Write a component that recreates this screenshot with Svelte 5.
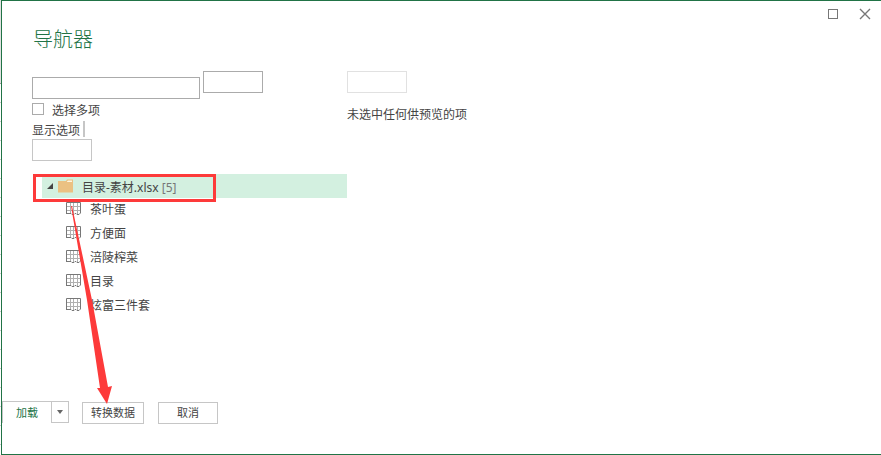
<script lang="ts">
  let search = $state('');
  let multiple = $state(false);

  const fileName = '目录-素材.xlsx';
  const sheets = ['茶叶蛋', '方便面', '涪陵榨菜', '目录', '炫富三件套'];
</script>

<div class="window">
  <div class="edge"></div>
  <div class="dialog">
    <header>
      <h1>导航器</h1>
      <div class="controls">
        <button class="control" aria-label="最大化">
          <svg width="12" height="12" viewBox="0 0 12 12">
            <rect x="1.5" y="1.5" width="9" height="9" />
          </svg>
        </button>
        <button class="control" aria-label="关闭">
          <svg width="12" height="12" viewBox="0 0 12 12">
            <path d="M1 1L11 11M11 1L1 11" stroke-width="1.4" />
          </svg>
        </button>
      </div>
    </header>

    <main>
      <section class="sidebar">
        <div class="search">
          <input type="text" aria-label="搜索" bind:value={search} />
          <button class="box dark" aria-label="搜索"></button>
        </div>
        <label class="multiple">
          <input type="checkbox" bind:checked={multiple} />
          <span>选择多项</span>
        </label>
        <div class="options">
          <span>显示选项</span>
          <i class="separator"></i>
        </div>
        <button class="box" aria-label="刷新"></button>

        <div class="tree">
          <div class="file">
            <svg class="arrow" width="7" height="7" viewBox="0 0 7 7">
              <path d="M6 0V6H0Z" />
            </svg>
            <svg class="folder" width="16" height="14" viewBox="0 0 16 14">
              <path d="M0 2H8L9 0.5H15V13.5H0Z" fill="#ebc182" />
              <path d="M9 2.5L10 1.5H14V3H9Z" fill="#fff5df" />
            </svg>
            <span class="name">{fileName} <span class="count">[{sheets.length}]</span></span>
          </div>
          <ul>
            {#each sheets as sheet}
              <li>
                <svg class="grid" width="15" height="16" viewBox="0 0 15 16">
                  <path class="inner" d="M1 4.5H14M1 8.5H14M4.5 1V12M7.5 1V12M11.5 1V12" />
                  <path class="outer" d="M0.5 12V0.5H14.5V11L13 12.5H11L10 11.5H9L8 12.5H6L5 11.5H0.5" />
                </svg>
                <span>{sheet}</span>
              </li>
            {/each}
          </ul>

          <div class="highlight"></div>
          <svg class="pointer" width="50" height="200" viewBox="0 0 50 200">
            <path d="M5 0H6L26 94L42 181L46 180L41 198L31 182L34 182L21 94Z" />
          </svg>
        </div>
      </section>

      <section class="preview">
        <button class="box light" aria-label="预览"></button>
        <p>未选中任何供预览的项</p>
      </section>
    </main>

    <footer>
      <div class="split">
        <button class="load">加载</button>
        <button class="more" aria-label="更多加载选项">
          <svg width="6" height="4" viewBox="0 0 6 4"><path d="M0 0H6L3 4Z" /></svg>
        </button>
      </div>
      <button class="box transform">转换数据</button>
      <button class="box">取消</button>
    </footer>
  </div>
</div>

<style>
  :global(body) {
    margin: 0;
    background: #fff;
  }

  .window {
    display: flex;
    min-height: 100vh;
    color: #444;
    font: 12px/16px "Noto Sans", "Noto Sans CJK SC", sans-serif;
  }

  /* sliver of the worksheet behind the dialog */
  .edge {
    width: 1px;
    background:
      linear-gradient(#e1e1e1 0 83px, #999 83px 84px, transparent 84px),
      repeating-linear-gradient(#fff 0 7px, #ccc 7px 8px, #fff 8px 19px);
  }

  .dialog {
    display: flex;
    flex: 1;
    flex-direction: column;
    border: 1px solid #217346;
    border-right: 0;
  }

  button {
    padding: 0;
    background: #fff;
    color: inherit;
    font: inherit;
  }

  header {
    display: flex;
    justify-content: space-between;
    padding: 7px 10px 0 31px;
  }

  h1 {
    margin: 17px 0 0;
    color: #217346;
    font-size: 20px;
    font-weight: 300;
    line-height: 30px;
  }

  .controls {
    display: flex;
    align-items: flex-start;
    gap: 20px;
  }

  .control {
    display: flex;
    border: 0;
  }

  .control svg {
    fill: none;
    stroke: #777;
  }

  main {
    display: flex;
    padding: 16px 0 0 30px;
  }

  .sidebar {
    width: 315px;
  }

  .box {
    box-sizing: border-box;
    display: block;
    width: 60px;
    height: 22px;
    border: 1px solid #c6c6c6;
  }

  .box.dark {
    border-color: #ababab;
  }

  .box.light {
    border-color: #e1e1e1;
  }

  .search {
    display: flex;
    align-items: flex-start;
    gap: 3px;
  }

  .search input {
    box-sizing: border-box;
    width: 168px;
    height: 22px;
    margin: 6px 0 0;
    padding: 0 4px;
    border: 1px solid #ababab;
    font: inherit;
  }

  .multiple {
    display: flex;
    align-items: center;
    gap: 8px;
    height: 20px;
  }

  .multiple span,
  .options span,
  .name {
    padding-top: 3px;
  }

  .multiple input {
    appearance: none;
    box-sizing: border-box;
    width: 12px;
    height: 12px;
    margin: 0;
    border: 1px solid #ababab;
  }

  .multiple input:checked {
    background: #217346;
  }

  .options {
    display: flex;
    align-items: center;
    gap: 3px;
    height: 20px;
  }

  .separator {
    width: 2px;
    height: 16px;
    background: #c6c6c6;
  }

  .tree {
    position: relative;
    margin-top: 13px;
  }

  .file {
    display: flex;
    align-items: center;
    height: 24px;
    margin-left: 10px;
    padding-left: 5px;
    background: #d3f0e0;
  }

  .arrow {
    margin-right: 4px;
    fill: #444;
  }

  .folder {
    margin-right: 8px;
  }

  .count {
    color: #777;
  }

  ul {
    margin: 0;
    padding: 0 0 0 34px;
    list-style: none;
  }

  li {
    display: flex;
    align-items: center;
    gap: 9px;
    height: 24px;
  }

  .grid {
    fill: none;
  }

  .inner {
    stroke: #b0b0b0;
  }

  .outer {
    stroke: #777;
  }

  .highlight {
    position: absolute;
    top: 0;
    left: 1px;
    box-sizing: border-box;
    width: 183px;
    height: 28px;
    border: 3px solid #fd3a3a;
  }

  .pointer {
    position: absolute;
    top: 32px;
    left: 34px;
    fill: #fd3a3a;
  }

  .preview p {
    margin: 14px 0 0;
  }

  footer {
    display: flex;
    align-items: flex-end;
    margin-top: auto;
    padding-bottom: 30px;
    font-size: 11px;
  }

  .split {
    display: flex;
    height: 22px;
    margin: 0 13px 1px 0;
    border-top: 1px solid #c6c6c6;
    border-left: 1px solid #c6c6c6;
    box-sizing: border-box;
  }

  .load {
    width: 48px;
    border: 0;
    color: #217346;
  }

  .more {
    display: flex;
    align-items: center;
    justify-content: center;
    width: 18px;
    border: 1px solid #c6c6c6;
    border-top: 0;
    fill: #666;
  }

  .transform {
    width: 62px;
    margin-right: 14px;
  }
</style>
